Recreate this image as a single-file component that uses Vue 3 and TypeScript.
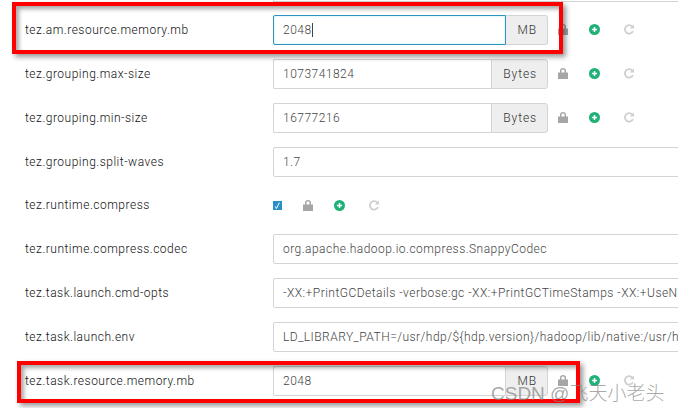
<template>
  <div class="config-page">
    <div class="prev-edge"></div>

    <div v-for="row in rows" :key="row.name" class="config-row">
      <label class="config-label">{{ row.name }}</label>

      <div v-if="row.checkbox" class="config-value check-value">
        <span class="checkbox">
          <svg width="9" height="9" viewBox="0 0 9 9"><path d="M2.4 5.4 L3.4 7.6 L6.4 1.6" fill="none" stroke="#fff" stroke-width="1" /></svg>
        </span>
      </div>
      <div v-else class="config-value" :class="{ 'has-unit': row.unit, 'is-wide': !row.unit }">
        <div class="field" :class="{ focused: row.focused }">
          <span>{{ row.value }}</span><i v-if="row.focused" class="caret"></i>
        </div>
        <div v-if="row.unit" class="unit">{{ row.unit }}</div>
      </div>

      <div v-if="row.unit || row.checkbox" class="actions" :class="{ tight: row.checkbox }">
        <svg class="lock" width="10" height="11" viewBox="0 0 10 11">
          <path d="M0 4.5 H2 V2.6 C2 1 3.2 0 5 0 C6.8 0 8 1 8 2.6 V4.5 H10 V11 H0 Z M3.5 4.5 H6.5 V2.8 C6.5 2 5.9 1.6 5 1.6 C4.1 1.6 3.5 2 3.5 2.8 Z" fill="#a6a6a6" fill-rule="evenodd" />
        </svg>
        <svg class="plus" width="11" height="11" viewBox="0 0 11 11">
          <circle cx="5.5" cy="5.5" r="5.5" fill="#1fb177" />
          <path d="M5.5 2.9 V8.1 M2.9 5.5 H8.1" stroke="#fff" stroke-width="1.5" />
        </svg>
        <svg class="undo" width="12" height="11" viewBox="0 0 12 11">
          <path d="M9.3 2.7 A4.2 4.2 0 1 0 9.9 7.2" fill="none" stroke="#cfcfcf" stroke-width="1.8" />
          <path d="M11 0.4 V4.6 H6.8 Z" fill="#cfcfcf" />
        </svg>
      </div>
    </div>

    <div class="mark mark-top"></div>
    <div class="mark mark-bottom"></div>
    <div class="watermark">CSDN @飞天小老头</div>
  </div>
</template>

<script setup lang="ts">
interface ConfigRow {
  name: string;
  value?: string;
  unit?: string;
  checkbox?: boolean;
  focused?: boolean;
}

const rows: ConfigRow[] = [
  { name: 'tez.am.resource.memory.mb', value: '2048', unit: 'MB', focused: true },
  { name: 'tez.grouping.max-size', value: '1073741824', unit: 'Bytes' },
  { name: 'tez.grouping.min-size', value: '16777216', unit: 'Bytes' },
  { name: 'tez.grouping.split-waves', value: '1.7' },
  { name: 'tez.runtime.compress', checkbox: true },
  { name: 'tez.runtime.compress.codec', value: 'org.apache.hadoop.io.compress.SnappyCodec' },
  {
    name: 'tez.task.launch.cmd-opts',
    value: '-XX:+PrintGCDetails -verbose:gc -XX:+PrintGCTimeStamps -XX:+UseN',
  },
  {
    name: 'tez.task.launch.env',
    value: 'LD_LIBRARY_PATH=/usr/hdp/${hdp.version}/hadoop/lib/native:/usr/h',
  },
  { name: 'tez.task.resource.memory.mb', value: '2048', unit: 'MB' },
];
</script>

<style scoped>
.config-page {
  position: relative;
  width: 678px;
  height: 408px;
  overflow: hidden;
  background: #fff;
  font-family: Roboto, "Liberation Sans", sans-serif;
  font-size: 12px;
  font-weight: 300;
  letter-spacing: 0.47px;
  color: #333;
}

.prev-edge {
  height: 1px;
  margin: 0 0 6px 273px;
  border-bottom: 1px solid #d4d4d4;
  border-left: 1px solid #d4d4d4;
}

.config-row {
  display: flex;
  align-items: center;
  height: 43.875px;
}

.config-label {
  flex: none;
  width: 248px;
  margin-left: 25px;
  letter-spacing: 0.5px;
  color: #111;
}

.config-value {
  display: flex;
  flex: none;
  height: 30px;
}

.has-unit {
  width: 275px;
}

.is-wide {
  width: 560px;
}

.check-value {
  width: 9px;
  align-items: center;
}

.checkbox {
  display: flex;
  width: 9px;
  height: 9px;
  background: #2a8fc7;
}

.field {
  display: flex;
  flex: 1;
  min-width: 0;
  align-items: center;
  padding: 0 9px;
  overflow: hidden;
  white-space: nowrap;
  color: #444;
  border: 1px solid #d4d4d4;
  border-radius: 2px;
}

.has-unit .field {
  border-right: 0;
  border-radius: 2px 0 0 2px;
}

.has-unit .field.focused {
  border: 1px solid #2f93bd;
  box-shadow: inset 0 0 2px rgba(100, 220, 230, 0.5);
}

.caret {
  width: 1px;
  height: 14px;
  background: #444;
}

.unit {
  display: flex;
  flex: none;
  align-items: center;
  padding: 0 10px 0 11px;
  letter-spacing: 0.9px;
  color: #333;
  background: #eee;
  border: 1px solid #d4d4d4;
  border-radius: 0 3px 3px 0;
}

.focused + .unit {
  border-left: 0;
}

.actions {
  display: flex;
  align-items: center;
  margin-left: 10px;
}

.actions.tight {
  margin-left: 21px;
}

.lock {
  margin-right: 21px;
}

.plus {
  margin-right: 23px;
}

.mark {
  position: absolute;
  border: 4px solid #f00;
  box-shadow: 3px 3px 5px rgba(0, 0, 0, 0.4), inset 3px 3px 4px rgba(0, 0, 0, 0.35);
}

.mark-top {
  left: 12px;
  top: 2px;
  width: 543px;
  height: 44px;
}

.mark-bottom {
  left: 17px;
  top: 361px;
  width: 555px;
  height: 34px;
}

.watermark {
  position: absolute;
  left: 491px;
  top: 378px;
  font-family: "Liberation Sans", "Noto Sans CJK SC", sans-serif;
  font-size: 19px;
  letter-spacing: 0;
  color: rgba(130, 130, 130, 0.7);
  white-space: nowrap;
}
</style>
